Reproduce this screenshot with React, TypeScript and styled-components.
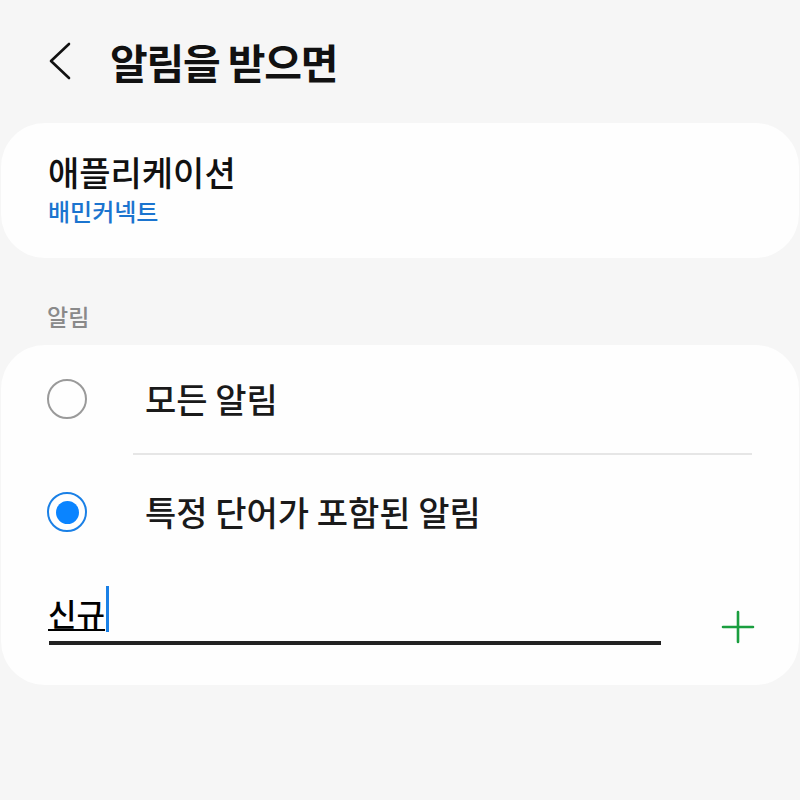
import { FC } from 'react';
import styled, { createGlobalStyle } from 'styled-components';

const GlobalStyle = createGlobalStyle`
  html, body {
    margin: 0;
    padding: 0;
    background: #f6f6f6;
  }
  body {
    font-family: 'Noto Sans CJK KR', 'Noto Sans', sans-serif;
    color: #111;
  }
`;

const Screen = styled.div`
  width: 800px;
  min-height: 800px;
  background: #f6f6f6;
  display: flex;
  flex-direction: column;
`;

const Header = styled.header`
  height: 123px;
  display: flex;
  align-items: center;
  padding-left: 48px;
  box-sizing: border-box;
`;

const BackButton = styled.button`
  width: 28px;
  height: 40px;
  padding: 0;
  border: none;
  background: transparent;
  display: flex;
  align-items: center;
  margin-top: -2px;
`;

const Title = styled.h1`
  margin: 0 0 0 34px;
  font-size: 41px;
  font-weight: 700;
  letter-spacing: -1.2px;
  line-height: 1;
  color: #111;
`;

const Card = styled.section`
  background: #fefefe;
  border-radius: 44px;
  margin: 0 1px;
  display: flex;
  flex-direction: column;
`;

const AppCard = styled(Card)`
  height: 135px;
  justify-content: center;
  padding: 0 47px 4px;
  box-sizing: border-box;
`;

const AppLabel = styled.div`
  font-size: 34px;
  font-weight: 500;
  line-height: 38px;
  color: #111;
`;

const AppName = styled.div`
  font-size: 24px;
  font-weight: 500;
  line-height: 28px;
  color: #1b74cf;
  margin-top: 6px;
`;

const SectionLabel = styled.div`
  height: 87px;
  display: flex;
  align-items: flex-end;
  padding: 0 0 14px 47px;
  font-size: 23px;
  font-weight: 500;
  line-height: 30px;
  color: #8a8a8a;
  box-sizing: border-box;
`;

const OptionRow = styled.label<{ $height: number }>`
  height: ${(p) => p.$height}px;
  display: flex;
  align-items: center;
  padding-left: 46px;
  gap: 58px;
`;

const Radio = styled.span<{ $checked?: boolean }>`
  width: 40px;
  height: 40px;
  border-radius: 50%;
  box-sizing: border-box;
  border: ${(p) => (p.$checked ? '2.5px solid #1a80e6' : '2px solid #9a9a9a')};
  display: flex;
  align-items: center;
  justify-content: center;
  flex-shrink: 0;

  &::after {
    content: '';
    display: ${(p) => (p.$checked ? 'block' : 'none')};
    width: 23px;
    height: 23px;
    border-radius: 50%;
    background: #0a84ff;
  }
`;

const OptionText = styled.span`
  font-size: 34px;
  font-weight: 500;
  line-height: 1;
  color: #1a1a1a;
`;

const Divider = styled.hr`
  margin: 0 47px 0 132px;
  border: none;
  height: 2px;
  background: #e6e6e6;
`;

const InputRow = styled.div`
  display: flex;
  align-items: flex-end;
  padding: 14px 47px 40px 48px;
`;

const InputField = styled.div`
  width: 612px;
  height: 62px;
  border-bottom: 4px solid #222;
  display: flex;
  align-items: center;
  box-sizing: border-box;
`;

const InputText = styled.span`
  font-size: 31px;
  font-weight: 500;
  color: #000;
  text-decoration: underline;
  text-decoration-thickness: 2px;
  text-underline-offset: 3px;
  line-height: 1;
  margin-left: -1px;
`;

const Caret = styled.span`
  width: 3px;
  height: 46px;
  background: #1a80e6;
  margin-left: 1px;
  margin-top: -6px;
`;

const AddButton = styled.button`
  margin-left: auto;
  width: 36px;
  height: 36px;
  padding: 0;
  border: none;
  background: transparent;
  display: flex;
  align-items: center;
  justify-content: center;
  margin-right: -4px;
`;

const App: FC = () => {
  return (
    <Screen>
      <GlobalStyle />
      <Header>
        <BackButton aria-label="back">
          <svg width="24" height="38" viewBox="0 0 24 38">
            <polyline
              points="21,2 3,19 21,36"
              fill="none"
              stroke="#111"
              strokeWidth="2.6"
              strokeLinecap="round"
              strokeLinejoin="round"
            />
          </svg>
        </BackButton>
        <Title>알림을 받으면</Title>
      </Header>

      <AppCard>
        <AppLabel>애플리케이션</AppLabel>
        <AppName>배민커넥트</AppName>
      </AppCard>

      <SectionLabel>알림</SectionLabel>

      <Card>
        <OptionRow $height={108}>
          <Radio />
          <OptionText>모든 알림</OptionText>
        </OptionRow>
        <Divider />
        <OptionRow $height={114}>
          <Radio $checked />
          <OptionText>특정 단어가 포함된 알림</OptionText>
        </OptionRow>
        <InputRow>
          <InputField>
            <InputText>신규</InputText>
            <Caret />
          </InputField>
          <AddButton aria-label="add">
            <svg width="34" height="34" viewBox="0 0 34 34">
              <path d="M17 2v30M2 17h30" stroke="#1a9e3f" strokeWidth="2.6" strokeLinecap="round" />
            </svg>
          </AddButton>
        </InputRow>
      </Card>
    </Screen>
  );
};

export default App;
